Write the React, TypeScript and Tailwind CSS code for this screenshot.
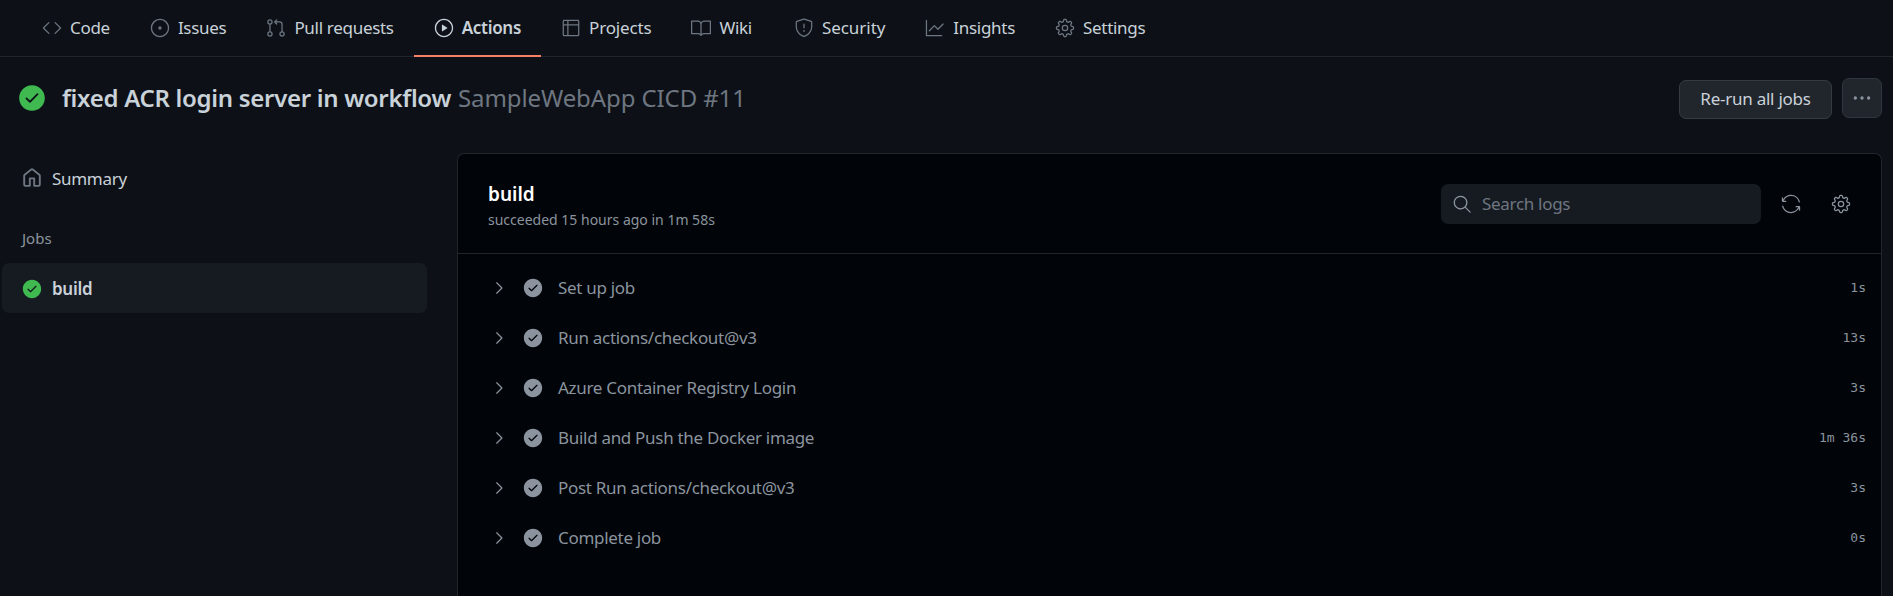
import { GoCode, GoIssueOpened, GoGitPullRequest, GoPlay, GoTable, GoBook, GoShield, GoGraph, GoGear, GoSync, GoSearch, GoKebabHorizontal, GoChevronRight, GoCheckCircleFill } from "react-icons/go";

const tabs = [
  { label: "Code", Icon: GoCode, cls: "tracking-[-0.3px]" },
  { label: "Issues", Icon: GoIssueOpened, cls: "tracking-[-0.3px]" },
  { label: "Pull requests", Icon: GoGitPullRequest, cls: "tracking-[-0.3px]" },
  { label: "Actions", Icon: GoPlay, active: true, cls: "tracking-[-0.3px]" },
  { label: "Projects", Icon: GoTable, cls: "tracking-[-0.15px]" },
  { label: "Wiki", Icon: GoBook, cls: "tracking-[-0.3px]" },
  { label: "Security", Icon: GoShield, cls: "ml-[2px] tracking-[-0.05px]" },
  { label: "Insights", Icon: GoGraph, cls: "tracking-[-0.3px]" },
  { label: "Settings", Icon: GoGear, cls: "tracking-[-0.3px]" },
];

const steps = [
  { name: "Set up job", time: "1s" },
  { name: "Run actions/checkout@v3", time: "13s" },
  { name: "Azure Container Registry Login", time: "3s" },
  { name: "Build and Push the Docker image", time: "1m 36s" },
  { name: "Post Run actions/checkout@v3", time: "3s" },
  { name: "Complete job", time: "0s" },
];

function HomeIcon() {
  return (
    <svg viewBox="0 0 16 16" width={20} height={20} fill="currentColor" className="mb-[3px] text-[#6e7681]">
      <path
        fillRule="evenodd"
        d="M6.906.664a1.749 1.749 0 0 1 2.187 0l5.25 4.2c.415.332.657.835.657 1.367v7.019A1.75 1.75 0 0 1 13.25 15h-3.5a.75.75 0 0 1-.75-.75V9H7v5.25a.75.75 0 0 1-.75.75h-3.5A1.75 1.75 0 0 1 1 13.25V6.23c0-.531.242-1.034.657-1.366l5.25-4.2Zm1.25 1.171a.25.25 0 0 0-.312 0l-5.25 4.2a.25.25 0 0 0-.094.196v7.019c0 .138.112.25.25.25H5.5V8.25a.75.75 0 0 1 .75-.75h3.5a.75.75 0 0 1 .75.75v5.25h2.75a.25.25 0 0 0 .25-.25V6.23a.25.25 0 0 0-.094-.195Z"
      />
    </svg>
  );
}

export default function App() {
  return (
    <div className="h-[596px] w-[1893px] overflow-hidden bg-[#0d1117] font-['Noto_Sans',sans-serif] text-[#c9d1d9]">
      <nav className="flex h-[57px] border-b border-[#21262d] pl-[22px]">
        {tabs.map(({ label, Icon, active, cls }) => (
          <div
            key={label}
            className={`-mb-px flex h-[57px] items-center gap-2 border-b-2 px-5 text-[17px] ${cls} ${active ? "border-[#f78166] font-semibold text-[#c9d1d9]" : "border-transparent"}`}
          >
            <Icon size={20} className={active ? "text-[#c9d1d9]" : "text-[#6e7681]"} />
            <span>{label}</span>
          </div>
        ))}
      </nav>

      <header className="flex h-[96px] items-center justify-between pb-[14px] pl-[18px] pr-[11px]">
        <div className="flex items-center gap-[16px]">
          <GoCheckCircleFill size={28} className="text-[#3fb950]" />
          <h1 className="text-[24px] font-semibold tracking-[-0.3px] text-[#c9d1d9]">
            fixed ACR login server in workflow{" "}
            <span className="ml-[1px] font-normal tracking-[-0.1px] text-[#6e7681]">SampleWebApp CICD #11</span>
          </h1>
        </div>
        <div className="flex items-start gap-[10px]">
          <button className="mt-[2px] h-[39px] w-[153px] rounded-[7px] border border-[#363b42] bg-[#21262d] text-[17px] tracking-[-0.25px] text-[#c9d1d9]">
            Re-run all jobs
          </button>
          <button className="flex h-[40px] w-[40px] items-center justify-center rounded-[7px] border border-[#30363d] bg-[#21262d] text-[#8b949e]">
            <GoKebabHorizontal size={20} />
          </button>
        </div>
      </header>

      <main className="flex">
        <aside className="w-[457px] shrink-0 pl-[2px] pr-[30px]">
          <div className="flex h-[52px] items-center gap-[10px] pl-5 text-[17px] tracking-[-0.3px]">
            <HomeIcon />
            <span>Summary</span>
          </div>
          <div className="flex h-[58px] items-center pl-5 pt-[8px] text-[15px] text-[#8b949e]">Jobs</div>
          <div className="flex h-[50px] items-center gap-[10px] rounded-[7px] bg-[#161b22] pl-5 pt-[2px] text-[17px] font-semibold tracking-[-0.3px]">
            <GoCheckCircleFill size={20} className="text-[#3fb950]" />
            <span>build</span>
          </div>
        </aside>

        <section className="mr-[11px] h-[460px] flex-1 rounded-t-[7px] border border-b-0 border-[#21262d] bg-[#010409]">
          <div className="flex h-[100px] items-center justify-between border-b border-[#21262d] pl-[30px] pr-[30px]">
            <div className="pt-[3px]">
              <div className="text-[19px] font-semibold leading-[26px] text-white">build</div>
              <div className="mt-[3px] text-[14px] leading-[20px] text-[#8b949e]">succeeded 15 hours ago in 1m 58s</div>
            </div>
            <div className="flex items-center">
              <div className="flex h-[40px] w-[320px] items-center gap-[10px] rounded-[7px] bg-[#161b22] pl-[11px] text-[17px] tracking-[-0.3px] text-[#6e7681]">
                <GoSearch size={20} className="text-[#8b949e]" />
                <span>Search logs</span>
              </div>
              <GoSync size={20} className="ml-[20px] text-[#8b949e]" />
              <GoGear size={20} className="ml-[30px] text-[#8b949e]" />
            </div>
          </div>
          <div className="pt-[9px]">
            {steps.map((s) => (
              <div key={s.name} className="flex h-[50px] items-center pl-[31px] pr-[15px] text-[17px] tracking-[-0.3px] text-[#8b949e]">
                <GoChevronRight size={20} className="text-[#8b949e]" />
                <GoCheckCircleFill size={20} className="ml-[14px] text-[#8b949e]" />
                <span className="ml-[15px]">{s.name}</span>
                <span className="ml-auto font-['DejaVu_Sans_Mono',monospace] text-[13px] tracking-normal">{s.time}</span>
              </div>
            ))}
          </div>
        </section>
      </main>
    </div>
  );
}
